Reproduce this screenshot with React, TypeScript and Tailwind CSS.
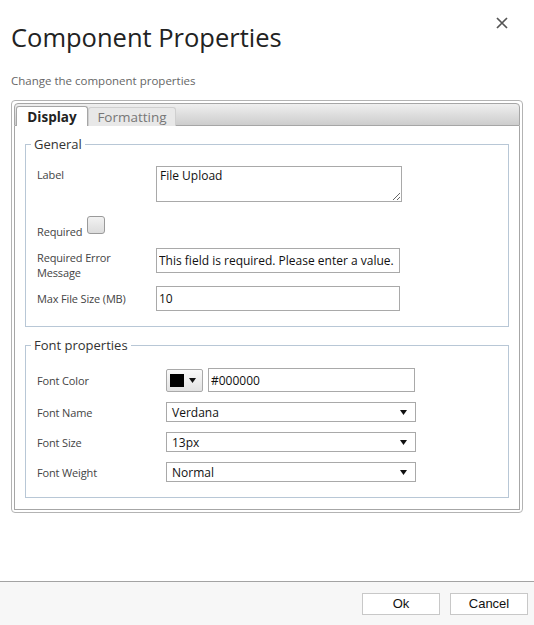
import { useState } from 'react';

function CloseIcon() {
  return (
    <svg width="12" height="12" viewBox="0 0 12 12" className="text-[#555]">
      <path d="M1 1 L11 11 M11 1 L1 11" stroke="currentColor" strokeWidth="1.7" />
    </svg>
  );
}

function Caret() {
  return (
    <svg width="7" height="5" viewBox="0 0 7 5">
      <path d="M0 0 H7 L3.5 5 Z" fill="#111" />
    </svg>
  );
}

function SelectBox({ value }: { value: string }) {
  return (
    <div className="w-[250px] h-[20px] border border-[#a9a9a9] bg-white flex items-center justify-between pl-[5px] pr-[8px] text-[12px] text-[#111]">
      <span className="mt-[2px]">{value}</span>
      <Caret />
    </div>
  );
}

const labelCls = 'text-[11px] tracking-[-0.15px] leading-[15px] text-[#444]';

export default function App() {
  const [tab, setTab] = useState('display');
  const [required, setRequired] = useState(false);

  const tabs = [
    { id: 'display', title: 'Display', width: 'w-[72px]' },
    { id: 'formatting', title: 'Formatting', width: 'w-[88px]' },
  ];

  const fontRows = [
    { label: 'Font Name', value: 'Verdana' },
    { label: 'Font Size', value: '13px' },
    { label: 'Font Weight', value: 'Normal' },
  ];

  return (
    <div className="w-[534px] h-[625px] bg-white flex flex-col font-['Open_Sans',sans-serif] text-[#444]">
      {/* Header */}
      <div className="flex items-start justify-between pl-[11px] pr-[26px]">
        <h1 className="mt-[20px] text-[25.5px] leading-[34px] text-[#222]">Component Properties</h1>
        <button className="mt-[17px]">
          <CloseIcon />
        </button>
      </div>
      <p className="pl-[11px] mt-[19px] text-[11.5px] leading-[16px] text-[#666]">Change the component properties</p>

      {/* Tab container */}
      <div className="ml-[11px] mt-[11px] w-[512px] h-[413px] border border-[#b3b3b3] rounded-[4px] p-[2px] flex flex-col">
        <div className="h-[23px] flex items-end pl-px border border-[#a6a6a6] rounded-t-[4px] bg-gradient-to-b from-[#efefef] to-[#cdcdcd]">
          {tabs.map((t) =>
            tab === t.id ? (
              <button
                key={t.id}
                onClick={() => setTab(t.id)}
                className={`${t.width} h-[20px] mb-[-1px] bg-white border border-b-0 border-[#a6a6a6] rounded-t-[3px] text-[13.5px] leading-[18px] font-bold text-[#222]`}
              >
                {t.title}
              </button>
            ) : (
              <button
                key={t.id}
                onClick={() => setTab(t.id)}
                className={`${t.width} h-[19px] mb-[-1px] bg-[#e8e8e8] border border-b-0 border-[#cfcfcf] rounded-t-[3px] text-[13.5px] leading-[18px] text-[#777]`}
              >
                {t.title}
              </button>
            )
          )}
        </div>

        <div className="flex-1 border-x border-b border-[#a6a6a6] bg-white px-[10px] pt-[9px]">
          {/* General */}
          <fieldset className="border border-[#b8c7d6] pb-[15px]">
            <legend className="ml-[5px] px-[3px] text-[13px] leading-[18px] text-[#333]">General</legend>

            <div className="pl-[11px]">
              <div className="flex mt-[13px]">
                <label className={`w-[119px] pt-[1px] ${labelCls}`}>Label</label>
                <textarea
                  defaultValue="File Upload"
                  className="w-[246px] h-[36px] border border-[#a9a9a9] px-[3px] py-[1px] text-[12px] leading-[15px] text-[#111] outline-none"
                />
              </div>

              <div className="flex items-end mt-[14px]">
                <label className={`w-[50px] mb-[-5px] ${labelCls}`}>Required</label>
                <input
                  type="checkbox"
                  checked={required}
                  onChange={(e) => setRequired(e.target.checked)}
                  className="appearance-none w-[18px] h-[18px] rounded-[3px] border border-[#9a9a9a] bg-gradient-to-b from-[#f2f2f2] to-[#dcdcdc]"
                />
              </div>

              <div className="flex h-[25px] mt-[14px]">
                <label className={`w-[119px] pt-[2px] ${labelCls} leading-[14.5px]`}>Required Error Message</label>
                <input
                  defaultValue="This field is required. Please enter a value."
                  className="w-[244px] h-[25px] border border-[#a9a9a9] px-[2px] text-[12px] text-[#111] outline-none"
                />
              </div>

              <div className="flex items-center mt-[13px]">
                <label className={`w-[119px] ${labelCls}`}>Max File Size (MB)</label>
                <input
                  defaultValue="10"
                  className="w-[244px] h-[25px] border border-[#a9a9a9] px-[2px] text-[12px] text-[#111] outline-none"
                />
              </div>
            </div>
          </fieldset>

          {/* Font properties */}
          <fieldset className="mt-[9px] border border-[#b8c7d6] pb-[15px]">
            <legend className="ml-[5px] px-[3px] text-[13px] leading-[18px] text-[#333]">Font properties</legend>

            <div className="pl-[11px]">
              <div className="flex items-center mt-[14px]">
                <label className={`w-[129px] ${labelCls}`}>Font Color</label>
                <button className="w-[37px] h-[23px] border border-[#a9a9a9] rounded-[2px] bg-gradient-to-b from-[#fafafa] to-[#e2e2e2] flex items-center gap-[5px] pl-[3px]">
                  <span className="w-[14px] h-[13px] bg-black" />
                  <Caret />
                </button>
                <input
                  defaultValue="#000000"
                  className="ml-[5px] w-[207px] h-[24px] border border-[#a9a9a9] px-[2px] text-[12px] text-[#111] outline-none"
                />
              </div>

              {fontRows.map((row) => (
                <div key={row.label} className="flex items-center mt-[10px]">
                  <label className={`w-[129px] ${labelCls}`}>{row.label}</label>
                  <SelectBox value={row.value} />
                </div>
              ))}
            </div>
          </fieldset>
        </div>
      </div>

      {/* Footer */}
      <div className="mt-auto h-[44px] border-t border-[#a3a3a3] bg-[#f7f7f7] flex justify-end gap-[10px] pt-[11px] pr-[6px] font-['Liberation_Sans',sans-serif]">
        <button className="w-[78px] h-[22px] border border-[#c8c8c8] bg-white text-[13px] text-[#111]">Ok</button>
        <button className="w-[78px] h-[22px] border border-[#c8c8c8] bg-white text-[13px] text-[#111]">Cancel</button>
      </div>
    </div>
  );
}
